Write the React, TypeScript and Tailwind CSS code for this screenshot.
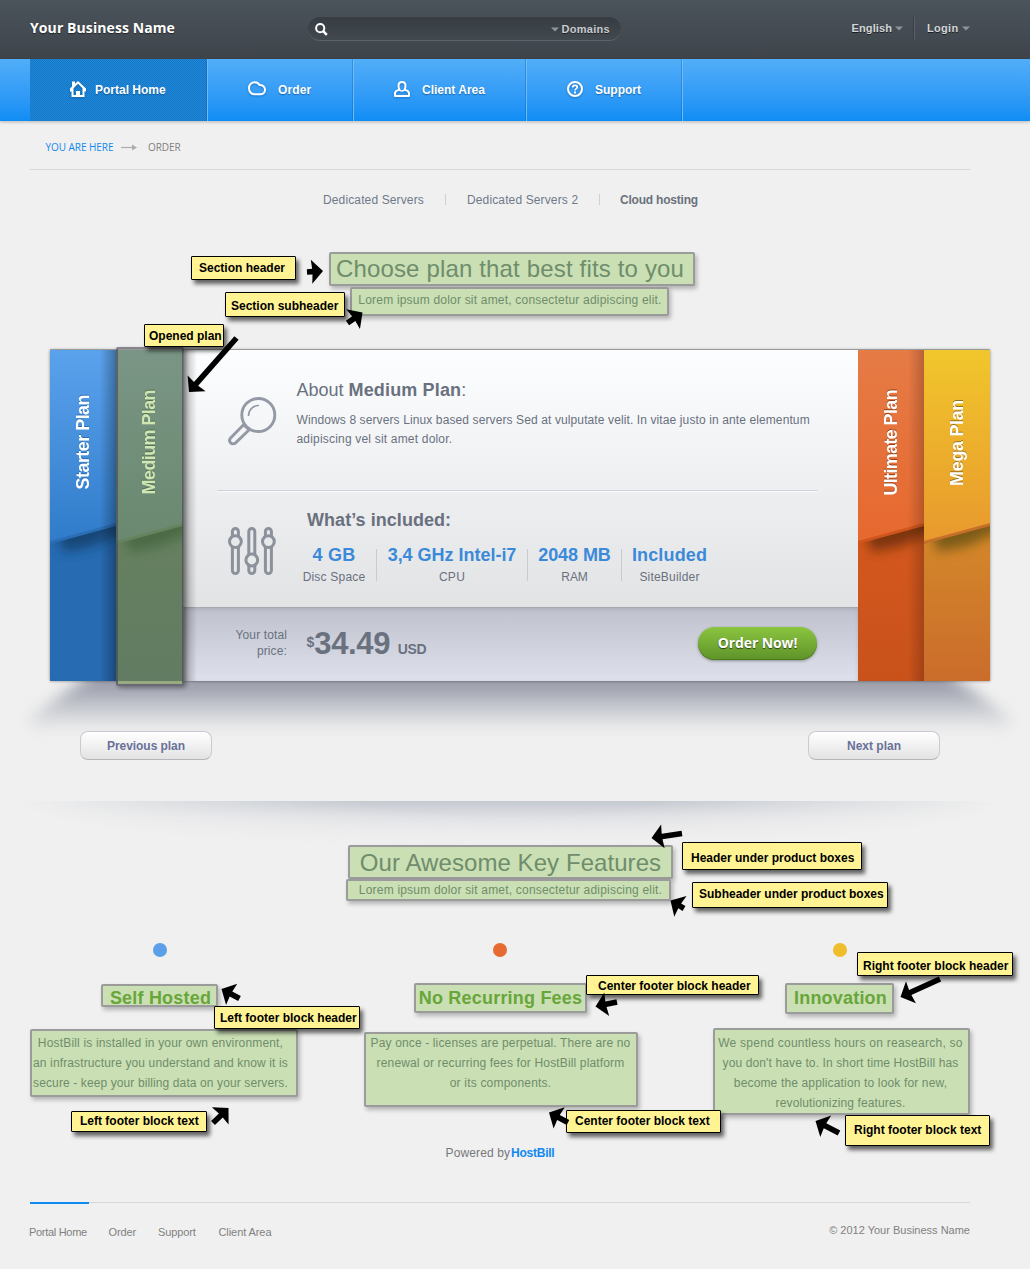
import type { ReactNode } from "react";

const liberation = "font-['Liberation_Sans',Arial,sans-serif]";
const openSans = "font-['Open_Sans','Noto_Sans',sans-serif]";

/* ---------- small drawings ---------- */

function Caret({ className = "" }: { className?: string }) {
  return (
    <svg width="8" height="5" viewBox="0 0 8 5" className={className}>
      <path d="M0 0.5h8L4 4.5z" fill="#8d949a" />
    </svg>
  );
}

function SearchIcon() {
  return (
    <svg width="13" height="13" viewBox="0 0 13 13" fill="none" stroke="#fff">
      <circle cx="5.2" cy="5.2" r="4.1" strokeWidth="2" />
      <path d="M8.2 8.2l3.6 3.6" strokeWidth="2.6" />
    </svg>
  );
}

function HomeIcon() {
  return (
    <svg width="16" height="16" viewBox="0 0 16 16" fill="#fff" fillRule="evenodd">
      <path d="M8 0L16 7.500V10.500H14.500V16H1.500V10.500H0V7.500L2 5.600V0.500H5V2.800zM8 2.800L3.500 7.300V14H6V10H10V14H12.500V7.300z" />
    </svg>
  );
}

function CloudIcon() {
  return (
    <svg width="18" height="16" viewBox="0 0 18 16" fill="none" stroke="#fff" strokeWidth="2">
      <path d="M6.2 13.2C3.2 13.2 1 10.6 1 7.2S3.5 1.2 6.6 1.2c2.200 0 4 1.100 5 2.900 3.100-.1 5.400 1.900 5.400 4.600s-2 4.500-4.700 4.500z" />
    </svg>
  );
}

function UserIcon() {
  return (
    <svg width="16" height="16" viewBox="0 0 16 16" fill="none" stroke="#fff" strokeWidth="2" strokeLinejoin="round">
      <path d="M5.500 8.600C4.800 7.600 4.500 6 4.500 4.700 4.500 2.500 5.900 1 8 1s3.500 1.500 3.500 3.700c0 1.300-.3 2.900-1 3.900 1.700.6 4.500 1.100 4.500 3.700V15H1v-2.700c0-2.600 2.800-3.100 4.500-3.700z" />
      <path d="M5 8.800c1.500 1.600 4.500 1.600 6 0" strokeWidth="1.500" />
    </svg>
  );
}

function HelpIcon() {
  return (
    <svg width="16" height="16" viewBox="0 0 16 16" fill="none" stroke="#fff" strokeWidth="2">
      <circle cx="8" cy="8" r="7" />
      <path d="M5.700 6.400C5.700 5.100 6.600 4.400 8 4.400s2.300.7 2.300 1.900C10.300 7.700 8 7.600 8 9.500" strokeWidth="1.700" />
      <path d="M7 10.600h2v1.800H7z" fill="#fff" stroke="none" />
    </svg>
  );
}

function MagnifierIcon() {
  return (
    <svg width="50" height="49" viewBox="0 0 50 49" fill="none" stroke="#9399a5" strokeWidth="2.900">
      <circle cx="30.300" cy="18" r="16.500" />
      <path d="M20.500 19c0-6 4-10.300 10.500-10.500" strokeWidth="1.600" />
      <path d="M15.800 27.500L2.600 41c-1.300 1.500-1.200 3.600.1 4.900s3.500 1.300 4.900 0L21.500 32.500" />
      <path d="M15.500 27.800l5.500 5" />
    </svg>
  );
}

function SlidersIcon() {
  const tubes = [
    { x: 7.400, knob: 14.600 },
    { x: 23.800, knob: 33 },
    { x: 40.400, knob: 14.600 },
  ];
  return (
    <svg width="48" height="48" viewBox="0 0 48 48" stroke="#8b929c" strokeWidth="3">
      {tubes.map((t) => (
        <g key={t.x}>
          <rect x={t.x - 3} y="1.500" width="6" height="45" rx="3" fill="none" />
          <circle cx={t.x} cy={t.knob} r="5.900" fill="#e8e9eb" />
        </g>
      ))}
    </svg>
  );
}

/* ---------- header ---------- */

function TopBar() {
  return (
    <header className="flex h-[59px] bg-linear-to-b from-[#4b535b] to-[#3e444a] pl-[30px]">
      <h1 className={`${openSans} mt-[17px] w-[278px] text-[14px] leading-[22px] font-bold tracking-[0.09px] text-white [text-shadow:0_1px_1px_rgba(0,0,0,0.5)]`}>
        Your Business Name
      </h1>
      <div className="mt-[17px] flex h-[24px] w-[313px] items-center rounded-full border-b border-[#5b636b] bg-linear-to-b from-[#363c42] to-[#42494f] pt-px pr-[11px] pl-[7px]">
        <SearchIcon />
        <Caret className="mr-[2px] ml-auto" />
        <span className="text-[11px] font-bold tracking-[0.3px] text-[#c9cdd0] [text-shadow:0_1px_0_rgba(0,0,0,0.5)]">Domains</span>
      </div>
      <div className="mt-[17px] ml-auto flex h-[23px] items-center pr-[60px] text-[11px] font-bold text-[#d3d6d8] [text-shadow:0_1px_0_rgba(0,0,0,0.6)]">
        <span className="tracking-[0.100px]">English</span>
        <Caret className="mr-[11px] ml-[3px]" />
        <span className="mr-[12px] h-full w-px bg-[#5a6269] shadow-[-1px_0_0_#383e44]" />
        <span className="w-[32px] tracking-[0.300px]">Login</span>
        <Caret className="ml-[3px]" />
      </div>
    </header>
  );
}

function NavItem({ icon, label, className }: { icon: ReactNode; label: string; className: string }) {
  return (
    <div className={`flex items-center border-r border-[#6cbbfa] text-[12px] font-bold text-white shadow-[inset_-1px_0_0_rgba(20,90,160,0.35)] [text-shadow:0_1px_1px_rgba(0,50,100,0.5)] ${className}`}>
      <span className="mb-[2px] drop-shadow-[0_1px_1px_rgba(0,50,100,0.35)]">{icon}</span>
      <span>{label}</span>
    </div>
  );
}

function MainNav() {
  return (
    <nav className="relative flex h-[62px] bg-linear-to-b from-[#51aef8] to-[#0d8df5] pl-[30px] shadow-[0_1px_3px_rgba(0,0,0,0.25)]">
      <NavItem
        icon={<HomeIcon />}
        label="Portal Home"
        className="w-[178px] gap-[9px] bg-[repeating-conic-gradient(#1676c4_0_25%,#1f89dc_0_50%)] bg-size-[2px_2px] pl-[40px]"
      />
      <NavItem icon={<CloudIcon />} label="Order" className="w-[146px] gap-[12px] pl-[40px] tracking-[0.100px]" />
      <NavItem icon={<UserIcon />} label="Client Area" className="w-[173px] gap-[12px] pl-[40px]" />
      <NavItem icon={<HelpIcon />} label="Support" className="w-[156px] gap-[12px] pl-[40px]" />
    </nav>
  );
}

function Breadcrumb() {
  return (
    <div className={`${openSans} mx-[30px] flex h-[49px] w-[940px] items-center border-b border-[#d8d8d8] pl-[15.500px] text-[10px]`}>
      <div className="flex items-center pt-[4px]">
        <span className="w-[75px] tracking-[-0.050px] text-[#1089f0]">YOU ARE HERE</span>
        <svg width="16" height="7" viewBox="0 0 16 7" className="mr-[11.500px]">
          <path d="M0 3.500h12" stroke="#acacac" strokeWidth="1.200" />
          <path d="M11 0.500l5 3-5 3z" fill="#acacac" />
        </svg>
        <span className="tracking-[-0.080px] text-[#808080]">ORDER</span>
      </div>
    </div>
  );
}

function GroupTabs() {
  return (
    <div className="flex h-[59px] items-center pl-[323px] text-[12px] text-[#6f7a89]">
      <span className="w-[122px] tracking-[0.130px]">Dedicated Servers</span>
      <span className="mr-[21px] h-[11px] w-px bg-[#cfcfcf]" />
      <span className="w-[132px] tracking-[0.130px]">Dedicated Servers 2</span>
      <span className="mr-[20px] h-[11px] w-px bg-[#cfcfcf]" />
      <span className="font-bold tracking-[-0.210px] text-[#6b727d]">Cloud hosting</span>
    </div>
  );
}

/* ---------- plan slider ---------- */

type StripProps = {
  id: string;
  name: string;
  top: [string, string];
  low: [string, string];
  edge: string;
  shade: string;
  width: string;
  text: string;
};

function PlanStrip({ id, name, top, low, edge, shade, width, text }: StripProps) {
  return (
    <div className={`relative h-[331px] shrink-0 overflow-hidden ${width}`}>
      <svg className="absolute inset-0 h-full w-full" viewBox="0 0 67 331" preserveAspectRatio="none">
        <defs>
          <linearGradient id={`${id}-top`} x1="0" y1="0" x2="0" y2="1">
            <stop offset="0" stopColor={top[0]} />
            <stop offset="1" stopColor={top[1]} />
          </linearGradient>
          <linearGradient id={`${id}-low`} x1="0" y1="0" x2="0" y2="1">
            <stop offset="0.500" stopColor={low[0]} />
            <stop offset="1" stopColor={low[1]} />
          </linearGradient>
          <filter id={`${id}-blur`} filterUnits="userSpaceOnUse" x="-40" y="130" width="150" height="120">
            <feGaussianBlur stdDeviation="6" />
          </filter>
        </defs>
        <rect width="67" height="331" fill={`url(#${id}-low)`} />
        <path d="M6 178L76 158V182L44 196L14 202z" fill={shade} filter={`url(#${id}-blur)`} />
        <path d="M0 0H67V176L0 194z" fill={edge} />
        <path d="M0 0H67V173L0 191z" fill={`url(#${id}-top)`} />
      </svg>
      <div className="relative flex h-[185px] items-center justify-center">
        <span className={`rotate-180 text-[18px] leading-[22px] font-bold whitespace-nowrap [writing-mode:vertical-rl] ${text}`}>{name}</span>
      </div>
    </div>
  );
}

const specs = [
  { value: "4 GB", label: "Disc Space", width: "w-[84px]", v: "tracking-[0.300px]", l: "tracking-[0.200px]" },
  { value: "3,4 GHz Intel-i7", label: "CPU", width: "w-[150px]", v: "tracking-[-0.020px]", l: "tracking-[0.300px]" },
  { value: "2048 MB", label: "RAM", width: "w-[93px]", v: "tracking-[-0.080px]", l: "tracking-[-0.100px]" },
  { value: "Included", label: "SiteBuilder", width: "w-[95px]", v: "tracking-[0.150px]", l: "tracking-[0.200px]" },
];

function PlanDetails() {
  return (
    <div className="flex w-[675px] flex-col text-[#69717f]">
      <div className="h-[257px] bg-linear-to-b from-[#fdfeff] via-[#eff0f2] to-[#e2e3e4] pt-[29px] pl-[34px]">
        <div className="flex h-[112px] w-[600px] border-b border-[#cdd0dd] pl-[11px] shadow-[0_1px_0_#fafafc]">
          <div className="w-[68.500px] pt-[18px]">
            <MagnifierIcon />
          </div>
          <div className="whitespace-nowrap">
            <h3 className="text-[18px] leading-[23px]">
              About <b className="tracking-[0.150px]">Medium Plan</b>:
            </h3>
            <p className="mt-[9px] text-[12px] leading-[19px] tracking-[0.110px]">
              Windows 8 servers Linux based servers Sed at vulputate velit. In vitae justo in ante elementum
              <br />
              <span className="tracking-[0.190px]">adipiscing vel sit amet dolor.</span>
            </p>
          </div>
        </div>
        <div className="flex pt-[18px] pl-[11px]">
          <div className="w-[64px] pt-[18px]">
            <SlidersIcon />
          </div>
          <div>
            <h3 className="pl-[15px] text-[18px] leading-[22px] font-bold tracking-[0.050px]">What’s included:</h3>
            <div className="mt-[13px] flex">
              {specs.map((s, i) => (
                <div key={s.label} className="flex">
                  {i > 0 && <span className="mt-[5px] h-[32px] w-px bg-[#c9cbce]" />}
                  <div className={`h-[41px] text-center ${s.width}`}>
                    <div className={`text-[18px] leading-[22px] font-bold whitespace-nowrap text-[#3b8ada] ${s.v}`}>{s.value}</div>
                    <div className={`mt-[3px] text-[12px] leading-[16px] ${s.l}`}>{s.label}</div>
                  </div>
                </div>
              ))}
            </div>
          </div>
        </div>
      </div>
      <div className="flex h-[74px] items-center bg-linear-to-b from-[#bfc1cc] to-[#dee0eb] pr-[41px] shadow-[inset_0_1px_0_#a5a8ae,inset_0_2px_4px_rgba(80,85,100,0.2)]">
        <div className="w-[104px] pb-[2px] text-right text-[12px] leading-[16px] tracking-[0.120px]">
          Your total
          <br />
          price:
        </div>
        <div className="ml-[19.500px] flex items-baseline pb-[1px] font-bold">
          <span className="relative -top-[7px] text-[14px]">$</span>
          <span className="mr-[7.500px] text-[31px] leading-[36px] tracking-[-0.350px]">34.49</span>
          <span className="text-[14px] tracking-[-0.300px]">USD</span>
        </div>
        <button className={`${openSans} mt-[-1px] ml-auto h-[33px] w-[119px] rounded-full bg-linear-to-b from-[#8bc540] to-[#5e9329] pb-[1px] text-[14px] leading-[32px] font-bold tracking-[-0.100px] text-white shadow-[inset_0_-1px_0_#4b7a1b,0_1px_3px_rgba(0,0,0,0.35)] [text-shadow:0_1px_1px_rgba(0,0,0,0.6)]`}>
          Order Now!
        </button>
      </div>
    </div>
  );
}

function PlanSlider() {
  return (
    <div className="relative mt-[34px] ml-[50px] h-[331px] w-[940px]">
      {/* cast shadow under the slider */}
      <div className="absolute top-[331px] -left-[45px] h-[60px] w-[1030px] overflow-hidden">
        <div className="h-[60px] blur-[7px]">
          <div className="-mt-[14px] ml-[25px] h-[64px] w-[980px] bg-linear-to-b from-[#9c9fab] from-30% via-[#bdc0c8] via-55% to-[#f0f0f0]/0 [clip-path:polygon(6%_0,94%_0,94%_15%,97%_45%,100%_80%,100%_100%,0_100%,0_80%,3%_45%,6%_15%)]" />
        </div>
      </div>
      <div className="relative flex h-[331px] shadow-[0_0_3px_rgba(0,0,0,0.45),0_-1px_0_#b9babc]">
        <PlanStrip
          id="starter" name="Starter Plan" width="w-[66px]"
          top={["#5ba2ec", "#307cca"]} low={["#276bb2", "#276bb2"]} edge="#2a6eb5" shade="#184676"
          text="tracking-[-0.550px] text-white [text-shadow:1px_0_0_#2f6cb0]"
        />
        <PlanStrip
          id="medium" name="Medium Plan" width="w-[67px]"
          top={["#7a9585", "#6a896f"]} low={["#66805f", "#617c62"]} edge="#65835f" shade="#4c6a45"
          text="mr-[2px] tracking-[-0.600px] text-[#cfe6b4] [text-shadow:1px_0_0_#50704f]"
        />
        <PlanDetails />
        <PlanStrip
          id="ultimate" name="Ultimate Plan" width="w-[66px]"
          top={["#e67b46", "#e6682f"]} low={["#d4581e", "#c9521b"]} edge="#cf551c" shade="#7d3411"
          text="tracking-[-0.650px] text-white [text-shadow:1px_0_0_#8f3e18]"
        />
        <PlanStrip
          id="mega" name="Mega Plan" width="w-[66px]"
          top={["#f1c62c", "#e8992d"]} low={["#d58b2a", "#ca6c2b"]} edge="#c66f2a" shade="#7d5c18"
          text="tracking-[-0.350px] text-white [text-shadow:1px_0_0_#94741c]"
        />
        {/* inner shadows where one strip sits above the next */}
        <div className="absolute top-0 left-[50px] h-full w-[16px] bg-linear-to-r from-transparent to-black/30" />
        <div className="absolute top-0 left-[133px] h-full w-[14px] bg-linear-to-r from-black/30 to-transparent" />
        <div className="absolute top-0 left-[858px] h-full w-[16px] bg-linear-to-r from-transparent to-black/20" />
      </div>
    </div>
  );
}

function PlanPager() {
  const button =
    "h-[29px] w-[132px] rounded-[8px] border border-[#c9cbd4] border-b-[#b5b6ba] bg-linear-to-b from-white to-[#e3e3e3] text-[12px] font-bold text-[#69719a]";
  return (
    <div className="relative mt-[50px] flex justify-between pr-[90px] pl-[80px]">
      <button className={`${button} tracking-[-0.050px]`}>Previous plan</button>
      <button className={button}>Next plan</button>
    </div>
  );
}

/* ---------- features ---------- */

const features = [
  {
    dot: "bg-[#5a9fe8]",
    title: "Self Hosted",
    lines: [
      ["HostBill is installed in your own environment,", "tracking-[0.170px]"],
      ["an infrastructure you understand and know it is", "tracking-[0.130px]"],
      ["secure - keep your billing data on your servers.", "tracking-[0.110px]"],
    ],
  },
  {
    dot: "bg-[#e66a32]",
    title: "No Recurring Fees",
    lines: [
      ["Pay once - licenses are perpetual. There are no", "tracking-[0.140px]"],
      ["renewal or recurring fees for HostBill platform", "tracking-[0.150px]"],
      ["or its components.", "tracking-[0.200px]"],
    ],
  },
  {
    dot: "bg-[#f0bd2c]",
    title: "Innovation",
    lines: [
      ["We spend countless hours on reasearch, so", "tracking-[0.260px]"],
      ["you don't have to. In short time HostBill has", "tracking-[0.120px]"],
      ["become the application to look for new,", "tracking-[0.150px]"],
      ["revolutionizing features.", "tracking-[0.120px]"],
    ],
  },
];

function Features() {
  return (
    <section className="relative mt-[41px] h-[344px] w-[1020px]">
      <div className="absolute top-0 left-[20px] -z-20 h-[48px] w-[980px] bg-linear-to-b from-[#c5cad1] via-[#dfe0e4] via-35% to-[#f0f0f0] [mask-image:radial-gradient(ellipse_50%_100%_at_50%_0,black_30%,transparent_100%)]" />
      <div className="w-[1021px] pt-[46px] text-center">
        <h2 className="h-[32px] text-[24px] leading-[32px] tracking-[0.070px] text-[#6f8d6c]">Our Awesome Key Features</h2>
        <p className="mt-[3px] text-[12px] leading-[16px] tracking-[0.200px] text-[#6f8d6c]">Lorem ipsum dolor sit amet, consectetur adipiscing elit.</p>
      </div>
      <div className="mt-[45px] ml-[30px] flex gap-[80px]">
        {features.map((f) => (
          <div key={f.title} className="flex w-[260px] flex-col items-center whitespace-nowrap">
            <span className={`h-[14px] w-[14px] rounded-full ${f.dot}`} />
            <h3 className="mt-[30px] pl-px text-[18px] leading-[22px] font-bold tracking-[0.200px] text-[#68a63a]">{f.title}</h3>
            <div className="mt-[24px] pl-px text-center text-[12px] leading-[20px] text-[#6f8d6c]">
              {f.lines.map(([line, tracking]) => (
                <p key={line} className={tracking}>{line}</p>
              ))}
            </div>
          </div>
        ))}
      </div>
    </section>
  );
}

function Footer() {
  return (
    <footer className="ml-[30px] w-[940px]">
      <p className="h-[16px] text-center text-[12px] leading-[16px] text-[#75787c]">
        <span className="mr-[1px] tracking-[0.120px]">Powered by</span>
        <b className="tracking-[-0.250px] text-[#1089f0]">HostBill</b>
      </p>
      <div className="mt-[41px] flex h-[60px] border-t border-[#d8d8d8] text-[11px] text-[#808080]">
        <div className="-mt-px mr-[19.500px] w-[59px] border-t-2 border-[#0f8bf2]">
          <p className="-ml-[1px] pt-[19px] leading-[18px] tracking-[-0.300px] whitespace-nowrap">Portal Home</p>
        </div>
        <p className="w-[49.500px] pt-[20px] leading-[18px] tracking-[-0.100px]">Order</p>
        <p className="w-[60.500px] pt-[20px] leading-[18px] tracking-[-0.100px]">Support</p>
        <p className="pt-[20px] leading-[18px] tracking-[-0.080px]">Client Area</p>
        <p className="ml-auto pt-[18px] leading-[18px]">© 2012 Your Business Name</p>
      </div>
    </footer>
  );
}

/* ---------- annotations placed freely over the page ---------- */

const highlights = [
  "top-[252px] left-[329px] h-[34px] w-[366px]",
  "top-[287px] left-[350px] h-[29px] w-[319px]",
  "top-[845px] left-[348px] h-[34px] w-[325px]",
  "top-[879px] left-[346px] h-[22px] w-[325px]",
  "top-[984px] left-[101px] h-[23px] w-[117px]",
  "top-[983px] left-[414px] h-[30px] w-[173px]",
  "top-[983px] left-[785px] h-[31px] w-[109px]",
  "top-[1029px] left-[30px] h-[68px] w-[268px]",
  "top-[1032px] left-[364px] h-[75px] w-[274px]",
  "top-[1028px] left-[713px] h-[87px] w-[257px]",
];

const notes = [
  ["Section header", "top-[256px] left-[191px] h-[24px] w-[105px] pl-[7px]"],
  ["Section subheader", "top-[292px] left-[225px] h-[25px] w-[120px] pt-[2px] pl-[5px]"],
  ["Opened plan", "top-[324px] left-[144px] h-[23px] w-[80px] pl-[4px]"],
  ["Header under product boxes", "top-[842px] left-[682px] h-[28px] w-[180px] pt-[3px] pl-[8px]"],
  ["Subheader under product boxes", "top-[882px] left-[692px] h-[26px] w-[196px] pb-[2px] pl-[6px]"],
  ["Right footer block header", "top-[952px] left-[857px] h-[24px] w-[156px] pt-[3px] pl-[5px]"],
  ["Center footer block header", "top-[975px] left-[586px] h-[20px] w-[173px] pt-[1px] pl-[11px]"],
  ["Left footer block header", "top-[1006px] left-[214px] h-[23px] w-[146px] pl-[5px]"],
  ["Left footer block text", "top-[1111px] left-[71px] h-[21px] w-[136px] pb-[1px] pl-[8px]"],
  ["Center footer block text", "top-[1110px] left-[566px] h-[23px] w-[155px] pb-[2px] pl-[8px]"],
  ["Right footer block text", "top-[1115px] left-[845px] h-[31px] w-[145px] pb-[1px] pl-[8px]"],
];

/* each arrow runs from tail (x1, y1) to tip (x2, y2) */
const arrows = [
  [307, 272, 323, 271],
  [347.500, 323, 362.500, 312.500],
  [236.500, 338, 189, 392],
  [682, 833.500, 651.500, 838],
  [684, 908.500, 670.500, 900.500],
  [617, 1002, 595.500, 1006.500],
  [239.500, 998.500, 221.500, 989],
  [213, 1123, 228.500, 1108],
  [568, 1122.500, 549, 1112.500],
  [839, 1133, 815.500, 1121],
  [940, 979, 900.500, 997],
];

function arrowPoints([x1, y1, x2, y2]: number[]) {
  const len = Math.hypot(x2 - x1, y2 - y1);
  const ux = (x2 - x1) / len;
  const uy = (y2 - y1) / len;
  const at = (back: number, side: number) => `${x2 - ux * back - uy * side},${y2 - uy * back + ux * side}`;
  return [at(0, 0), at(11.500, 12), at(10.700, 2.800), at(len, 2.800), at(len, -2.800), at(10.700, -2.800), at(11.500, -12)].join(" ");
}

function Annotations() {
  return (
    <>
      <div className="absolute top-[347px] left-[116px] h-[339px] w-[68px] rounded-[2px] border-2 border-[#47434f]/60 shadow-[2px_2px_4px_rgba(0,0,0,0.35)]" />
      <div className="absolute top-[681px] left-[118px] h-[3px] w-[64px] bg-[#98ab80]" />
      {notes.map(([label, box]) => (
        <div key={label} className={`absolute flex items-center rounded-[1px] border border-black bg-[#fff394] text-[12px] font-bold whitespace-nowrap text-black shadow-[3px_4px_4px_rgba(0,0,0,0.6)] ${box}`}>
          {label}
        </div>
      ))}
      <svg className="pointer-events-none absolute top-0 left-0" width="1030" height="1269" viewBox="0 0 1030 1269">
        {arrows.map((a) => (
          <polygon key={a.join()} points={arrowPoints(a)} fill="#000" />
        ))}
      </svg>
    </>
  );
}

export default function App() {
  return (
    <div className={`${liberation} relative isolate h-[1269px] w-[1030px] overflow-hidden bg-[#f0f0f0]`}>
      <TopBar />
      <MainNav />
      <Breadcrumb />
      <GroupTabs />
      <div className="mt-[24px] h-[63px] w-[1020px] text-center">
        <h2 className="h-[32px] text-[24px] leading-[32px] tracking-[0.160px] text-[#6f8d6c]">Choose plan that best fits to you</h2>
        <p className="mt-[7px] text-[12px] leading-[16px] tracking-[0.200px] text-[#6f8d6c]">Lorem ipsum dolor sit amet, consectetur adipiscing elit.</p>
      </div>
      <PlanSlider />
      <PlanPager />
      <Features />
      <Footer />
      {highlights.map((box) => (
        <div key={box} className={`absolute -z-10 rounded-[2px] border-2 border-[#9b9b9b] bg-[#cadfb3] shadow-[2px_3px_4px_rgba(0,0,0,0.25)] ${box}`} />
      ))}
      <Annotations />
    </div>
  );
}
